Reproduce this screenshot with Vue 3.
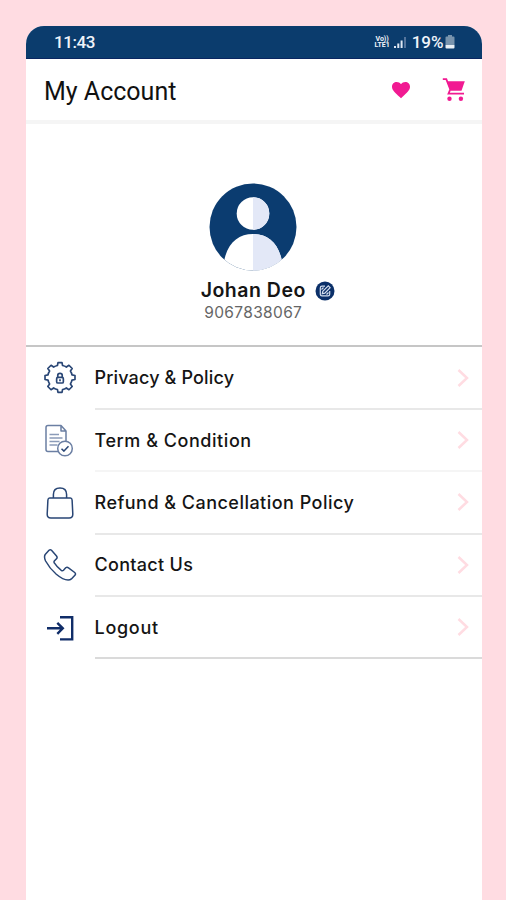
<template>
  <div class="page">
    <div class="phone">
      <div class="status">
        <span class="time">11:43</span>
        <div class="status-right">
          <div class="volte"><span>Vo))</span><span>LTE1</span></div>
          <svg class="signal" width="13" height="13" viewBox="0 0 13 13">
            <path d="M0 10h2v2H0zM3.300 7.500h2V12h-2zM6.600 4.500h2V12h-2z" fill="#dfe7f3" />
            <path d="M10 1h2v11h-2z" fill="#54749c" />
          </svg>
          <span class="percent">19%</span>
          <svg class="battery" width="10" height="14" viewBox="0 0 10 14">
            <path d="M3 0h4v1.500h1.500q1 0 1 1V10h-9V2.500q0-1 1-1H3z" fill="#7893ad" />
            <path d="M.5 10h9v2.500q0 1-1 1h-7q-1 0-1-1z" fill="#e9eff5" />
          </svg>
        </div>
      </div>

      <header class="header">
        <h1>My Account</h1>
        <svg class="heart" width="20" height="18" viewBox="0 0 20 18">
          <path d="M10 17.200L8.700 16C4 11.700 1 9 1 5.700 1 3 3.100 1 5.700 1c1.700 0 3.300.8 4.300 2.200C11 1.800 12.600 1 14.300 1 16.900 1 19 3 19 5.700c0 3.300-3 6-7.700 10.300z" fill="#f11a92" />
        </svg>
        <svg class="cart" width="24" height="24" viewBox="0 0 24 24">
          <path d="M.8 1.200h3.500l4 10.100L6.500 15.700H22" fill="none" stroke="#f11a92" stroke-width="1.800" />
          <path d="M4.800 3.200h18l-3.300 9.600H8.600z" fill="#f11a92" />
          <circle cx="7.500" cy="20.700" r="2.200" fill="#f11a92" />
          <circle cx="18.900" cy="20.700" r="2.200" fill="#f11a92" />
        </svg>
      </header>

      <section class="profile">
        <svg class="avatar" width="88" height="88" viewBox="0 0 88 88">
          <defs>
            <clipPath id="round"><circle cx="44" cy="44" r="43.500" /></clipPath>
          </defs>
          <g clip-path="url(#round)">
            <rect width="88" height="88" fill="#0b3c70" />
            <circle cx="44" cy="30.500" r="16.300" fill="#fff" />
            <path d="M44 14.200a16.300 16.300 0 0 1 0 32.600z" fill="#e3e8f7" />
            <path d="M14 88C15 63 27 51 44 51s29 12 30 37z" fill="#fff" />
            <path d="M44 51c17 0 29 12 30 37H44z" fill="#e3e8f7" />
          </g>
        </svg>
        <div class="name-row">
          <span class="name">Johan Deo</span>
          <svg class="edit" width="20" height="20" viewBox="0 0 20 20">
            <circle cx="10" cy="10" r="9.500" fill="#0b3069" />
            <path d="M10 5.200H7Q5.300 5.200 5.300 7v6.200q0 1.600 1.700 1.600h6q1.700 0 1.700-1.600V10M7.300 12.700l.5-2.500 5.500-5.300 1.800 1.800-5.300 5.500zM6.500 8.500l2-2M11.500 13.500l2-2" fill="none" stroke="#d5dfef" stroke-width="1.200" />
          </svg>
        </div>
        <span class="number">9067838067</span>
      </section>

      <ul class="menu">
        <li v-for="item in items" :key="item.icon">
          <div class="icon">
            <svg v-if="item.icon === 'gear'" width="34" height="34" viewBox="1.800 1.800 30.400 30.400">
              <path d="M14.700 4.300L15.200 1.700h3.600l.5 2.600q2 .4 3.400 1.400l2.300-1.600 2.900 2.900-1.600 2.300q1.100 1.600 1.400 3.400l2.700.6v3.500l-2.700.6q-.3 1.800-1.400 3.400l1.600 2.300-2.900 2.900-2.300-1.600q-1.600 1-3.400 1.400l-.5 2.600h-3.600l-.5-2.600q-1.800-.4-3.400-1.400L9 26 6.100 23.100l1.600-2.300q-1.100-1.600-1.400-3.400l-2.700-.6v-3.500l2.700-.6q.3-1.800 1.400-3.400L6.100 7 9 4.100l2.300 1.600q1.600-1 3.400-1.400z" transform="translate(0 1.500)" />
              <rect x="14" y="16.500" width="6" height="5" rx="1.200" />
              <path d="M15 16.500v-1.800q0-1.800 2-1.800t2 1.800v1.800M17 18.200v1.600" />
            </svg>
            <svg v-else-if="item.icon === 'document'" width="34" height="34" viewBox="0 0 34 34">
              <path class="thin" d="M15.500 27.500H5Q3 27.500 3 25.500v-22q0-2 2-2h13l5 5.500v10M18 1.500V7h5" />
              <path class="lines" d="M6.500 10.500H16M6.500 14h13M6.500 17.500h10M6.500 21h8" />
              <circle class="thin" cx="22" cy="24.500" r="7.300" />
              <path d="M18.500 24.700l2.500 2.400 4.500-4.900" />
            </svg>
            <svg v-else-if="item.icon === 'bag'" width="34" height="34" viewBox="0 0 34 34">
              <path d="M6.600 12h20.800q1.500 0 1.700 2l.7 14q.1 4-3.600 4H7.800q-3.700 0-3.600-4l.7-14q.2-2 1.700-2z" />
              <path d="M10.400 12V8.500Q10.400 2 17 2t6.600 6.500V12" />
            </svg>
            <svg v-else-if="item.icon === 'phone'" width="34" height="34" viewBox="0 0 34 34">
              <path d="M2.200 6.500L6 2.300q1.300-1.200 2.500 0l5 5.700q1.200 1.500 0 2.700L11.300 13q-.7 1 .2 2.200 2.500 4 6.800 7.200 1.200.8 2.200-.2l2.200-2.400q1.300-1.100 2.800 0l6.200 4.700q1.500 1.300.2 2.700l-3.500 3.700q-1.300 1.100-3.300 1.100-5 0-11.800-5.700Q6.500 20.300 2.600 13 .7 8.800 2.200 6.500z" />
            </svg>
            <svg v-else width="34" height="34" viewBox="0 0 34 34">
              <path class="bold" d="M17 6.200h12.200v22.200H17M4 17.300h15.700M14.300 11.800l5.500 5.500-5.500 5.500" />
            </svg>
          </div>
          <div class="row">
            <span :style="{ letterSpacing: item.spacing + 'px' }">{{ item.label }}</span>
            <svg class="chevron" width="12" height="20" viewBox="0 0 12 20">
              <path d="M1.500 2l8.500 8-8.500 8" fill="none" stroke="#ffdce2" stroke-width="2.500" />
            </svg>
          </div>
        </li>
      </ul>
    </div>
  </div>
</template>

<script setup>
const items = [
  { icon: 'gear', label: 'Privacy & Policy', spacing: 0.15 },
  { icon: 'document', label: 'Term & Condition', spacing: 0.55 },
  { icon: 'bag', label: 'Refund & Cancellation Policy', spacing: 0.48 },
  { icon: 'phone', label: 'Contact Us', spacing: 0.3 },
  { icon: 'logout', label: 'Logout', spacing: 0.7 }
]
</script>

<style>
body {
  background: #ffdce2;
}
</style>

<style scoped>
.page {
  box-sizing: border-box;
  height: 900px;
  padding: 26px 24.5px 0 26px;
  background: #ffdce2;
  overflow: hidden;
}
.phone {
  height: 874px;
  background: #fff;
  border-radius: 18px 18px 0 0;
  overflow: hidden;
}
.status {
  box-sizing: border-box;
  display: flex;
  align-items: center;
  justify-content: space-between;
  height: 33px;
  padding: 0 27px 0 28px;
  background: #0b3c6d;
  border-bottom: 1px solid #0a2661;
  color: #f0f4fa;
  font-family: Roboto, sans-serif;
  font-size: 17px;
  font-weight: 500;
}
.time {
  letter-spacing: -0.4px;
}
.status-right {
  display: flex;
  align-items: center;
}
.volte {
  display: flex;
  flex-direction: column;
  align-items: center;
  width: 17px;
  margin-right: 3px;
  font-size: 7px;
  font-weight: 700;
  line-height: 6.5px;
}
.percent {
  margin-left: 5px;
}
.battery {
  margin-left: 1px;
}
.header {
  box-sizing: border-box;
  display: flex;
  align-items: center;
  height: 65px;
  padding: 0 15.5px 0 18px;
  border-bottom: 4px solid #f5f5f5;
}
h1 {
  flex: 1;
  margin: 4px 0 0;
  font-family: Roboto, sans-serif;
  font-size: 25px;
  font-weight: 400;
  color: #111;
}
.heart {
  margin-right: 31px;
}
.profile {
  box-sizing: border-box;
  display: flex;
  flex-direction: column;
  align-items: center;
  height: 223px;
  padding: 59px 1px 0 0;
  border-bottom: 2px solid #c6c6c6;
  font-family: Inter, sans-serif;
}
.name-row {
  display: flex;
  align-items: center;
  gap: 9px;
  height: 28px;
  margin: 5px 0 0 29px;
}
.name {
  font-size: 19.5px;
  font-weight: 600;
  letter-spacing: 0.5px;
  color: #151515;
}
.edit {
  position: relative;
  top: 1px;
}
.number {
  margin-top: -1px;
  font-size: 15.5px;
  line-height: 20px;
  letter-spacing: 0.35px;
  color: #666;
}
.menu {
  margin: 0;
  padding: 0.5px 0 0;
  list-style: none;
  font-family: Inter, sans-serif;
}
.menu li {
  display: flex;
  height: 62.4px;
}
.icon {
  display: flex;
  align-items: center;
  width: 51.5px;
  padding-left: 17px;
}
.icon svg {
  margin-top: -1px;
  fill: none;
  stroke: #294675;
  stroke-width: 1.5;
  stroke-linejoin: round;
}
.icon .thin {
  stroke: #6b7fa3;
}
.icon .lines {
  stroke: #8b9bb8;
}
.icon .bold {
  stroke: #102d68;
  stroke-width: 2.4;
  stroke-linejoin: miter;
}
.row {
  box-sizing: border-box;
  display: flex;
  flex: 1;
  align-items: center;
  justify-content: space-between;
  padding-right: 13px;
  border-bottom: 2px solid #e8e8e8;
  font-size: 18px;
  font-weight: 500;
  color: #151515;
}
.menu li:nth-child(2) .row {
  border-color: #f5f5f5;
}
.menu li:last-child .row {
  border-color: #dadada;
}
</style>
